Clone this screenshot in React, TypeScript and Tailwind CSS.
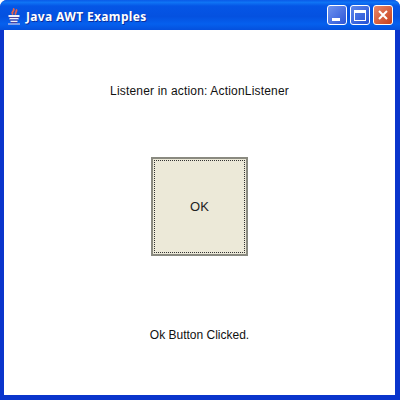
export default function App() {
  return (
    <div className="w-[400px] h-[400px] bg-white overflow-hidden" style={{ fontFamily: '"Liberation Sans", Arial, sans-serif' }}>
      <div className="w-full h-full flex flex-col rounded-t-[7px] bg-[#0a35cc] overflow-hidden">
        {/* title bar */}
        <div className="h-[30px] shrink-0 flex items-center pt-[3px] pl-[6px] pr-[7px] bg-[linear-gradient(180deg,#0a5ae8_0%,#0f74f5_8%,#0556e6_20%,#0451e0_55%,#0560ee_80%,#0450dd_100%)]">
          <svg width="16" height="17" viewBox="0 0 16 17" className="shrink-0">
            <path d="M7 0.5c3 2-3 3.500 0 6M10 1.500c2 2-2 3 0 5" fill="none" stroke="#e8604a" strokeWidth="1.8" />
            <path d="M2.500 7h11v2h-11zM3.500 10h9v1.500h-9zM4.500 12.500h7v1.500h-7z" fill="#eef0fa" />
            <path d="M3 9.500h10M4 12h8M5 14.500h6" stroke="#4c3f9c" strokeWidth="1.200" />
            <path d="M2 16h12" stroke="#a4b2ea" strokeWidth="1.400" />
          </svg>
          <span className="ml-[4px] text-white font-bold text-[12px] tracking-[0.35px] [font-family:'Noto_Sans',sans-serif] [text-shadow:1px_1px_0_#0a2f9c]">Java AWT Examples</span>
          <div className="ml-auto flex gap-[3px] -mt-[3px]">
            <div className="w-[20px] h-[20px] rounded-[3px] border border-white bg-[linear-gradient(135deg,#6f93ee,#2c55d8)] flex items-end pl-[4px] pb-[3px]">
              <div className="w-[8px] h-[3px] bg-white" />
            </div>
            <div className="w-[20px] h-[20px] rounded-[3px] border border-white bg-[linear-gradient(135deg,#5f87ea,#2350d6)] flex items-center justify-center">
              <div className="w-[12px] h-[11px] border border-white border-t-[3px]" />
            </div>
            <div className="w-[20px] h-[20px] rounded-[3px] border border-white bg-[linear-gradient(135deg,#e8866a,#c8401c)] flex items-center justify-center">
              <svg width="12" height="12" viewBox="0 0 12 12">
                <path d="M2 2l8 8M10 2l-8 8" stroke="#fff" strokeWidth="2" />
              </svg>
            </div>
          </div>
        </div>
        {/* client area */}
        <div className="flex-1 ml-[4px] mr-[5px] mb-[5px] bg-white flex flex-col items-center text-[12px] text-[#111]">
          <div className="mt-[54px] h-[14px] leading-[14px] tracking-[0.18px]">Listener in action: ActionListener</div>
          <button className="mt-[59px] w-[97px] h-[99px] bg-[#ece9d8] border-2 border-[#8a8a80] p-[1px] text-[13px]">
            <div className="w-full h-full border border-dotted border-[#333] flex items-center justify-center text-[#222]">OK</div>
          </button>
          <div className="mt-[72px] h-[14px] leading-[14px]">Ok Button Clicked.</div>
        </div>
      </div>
    </div>
  );
}
